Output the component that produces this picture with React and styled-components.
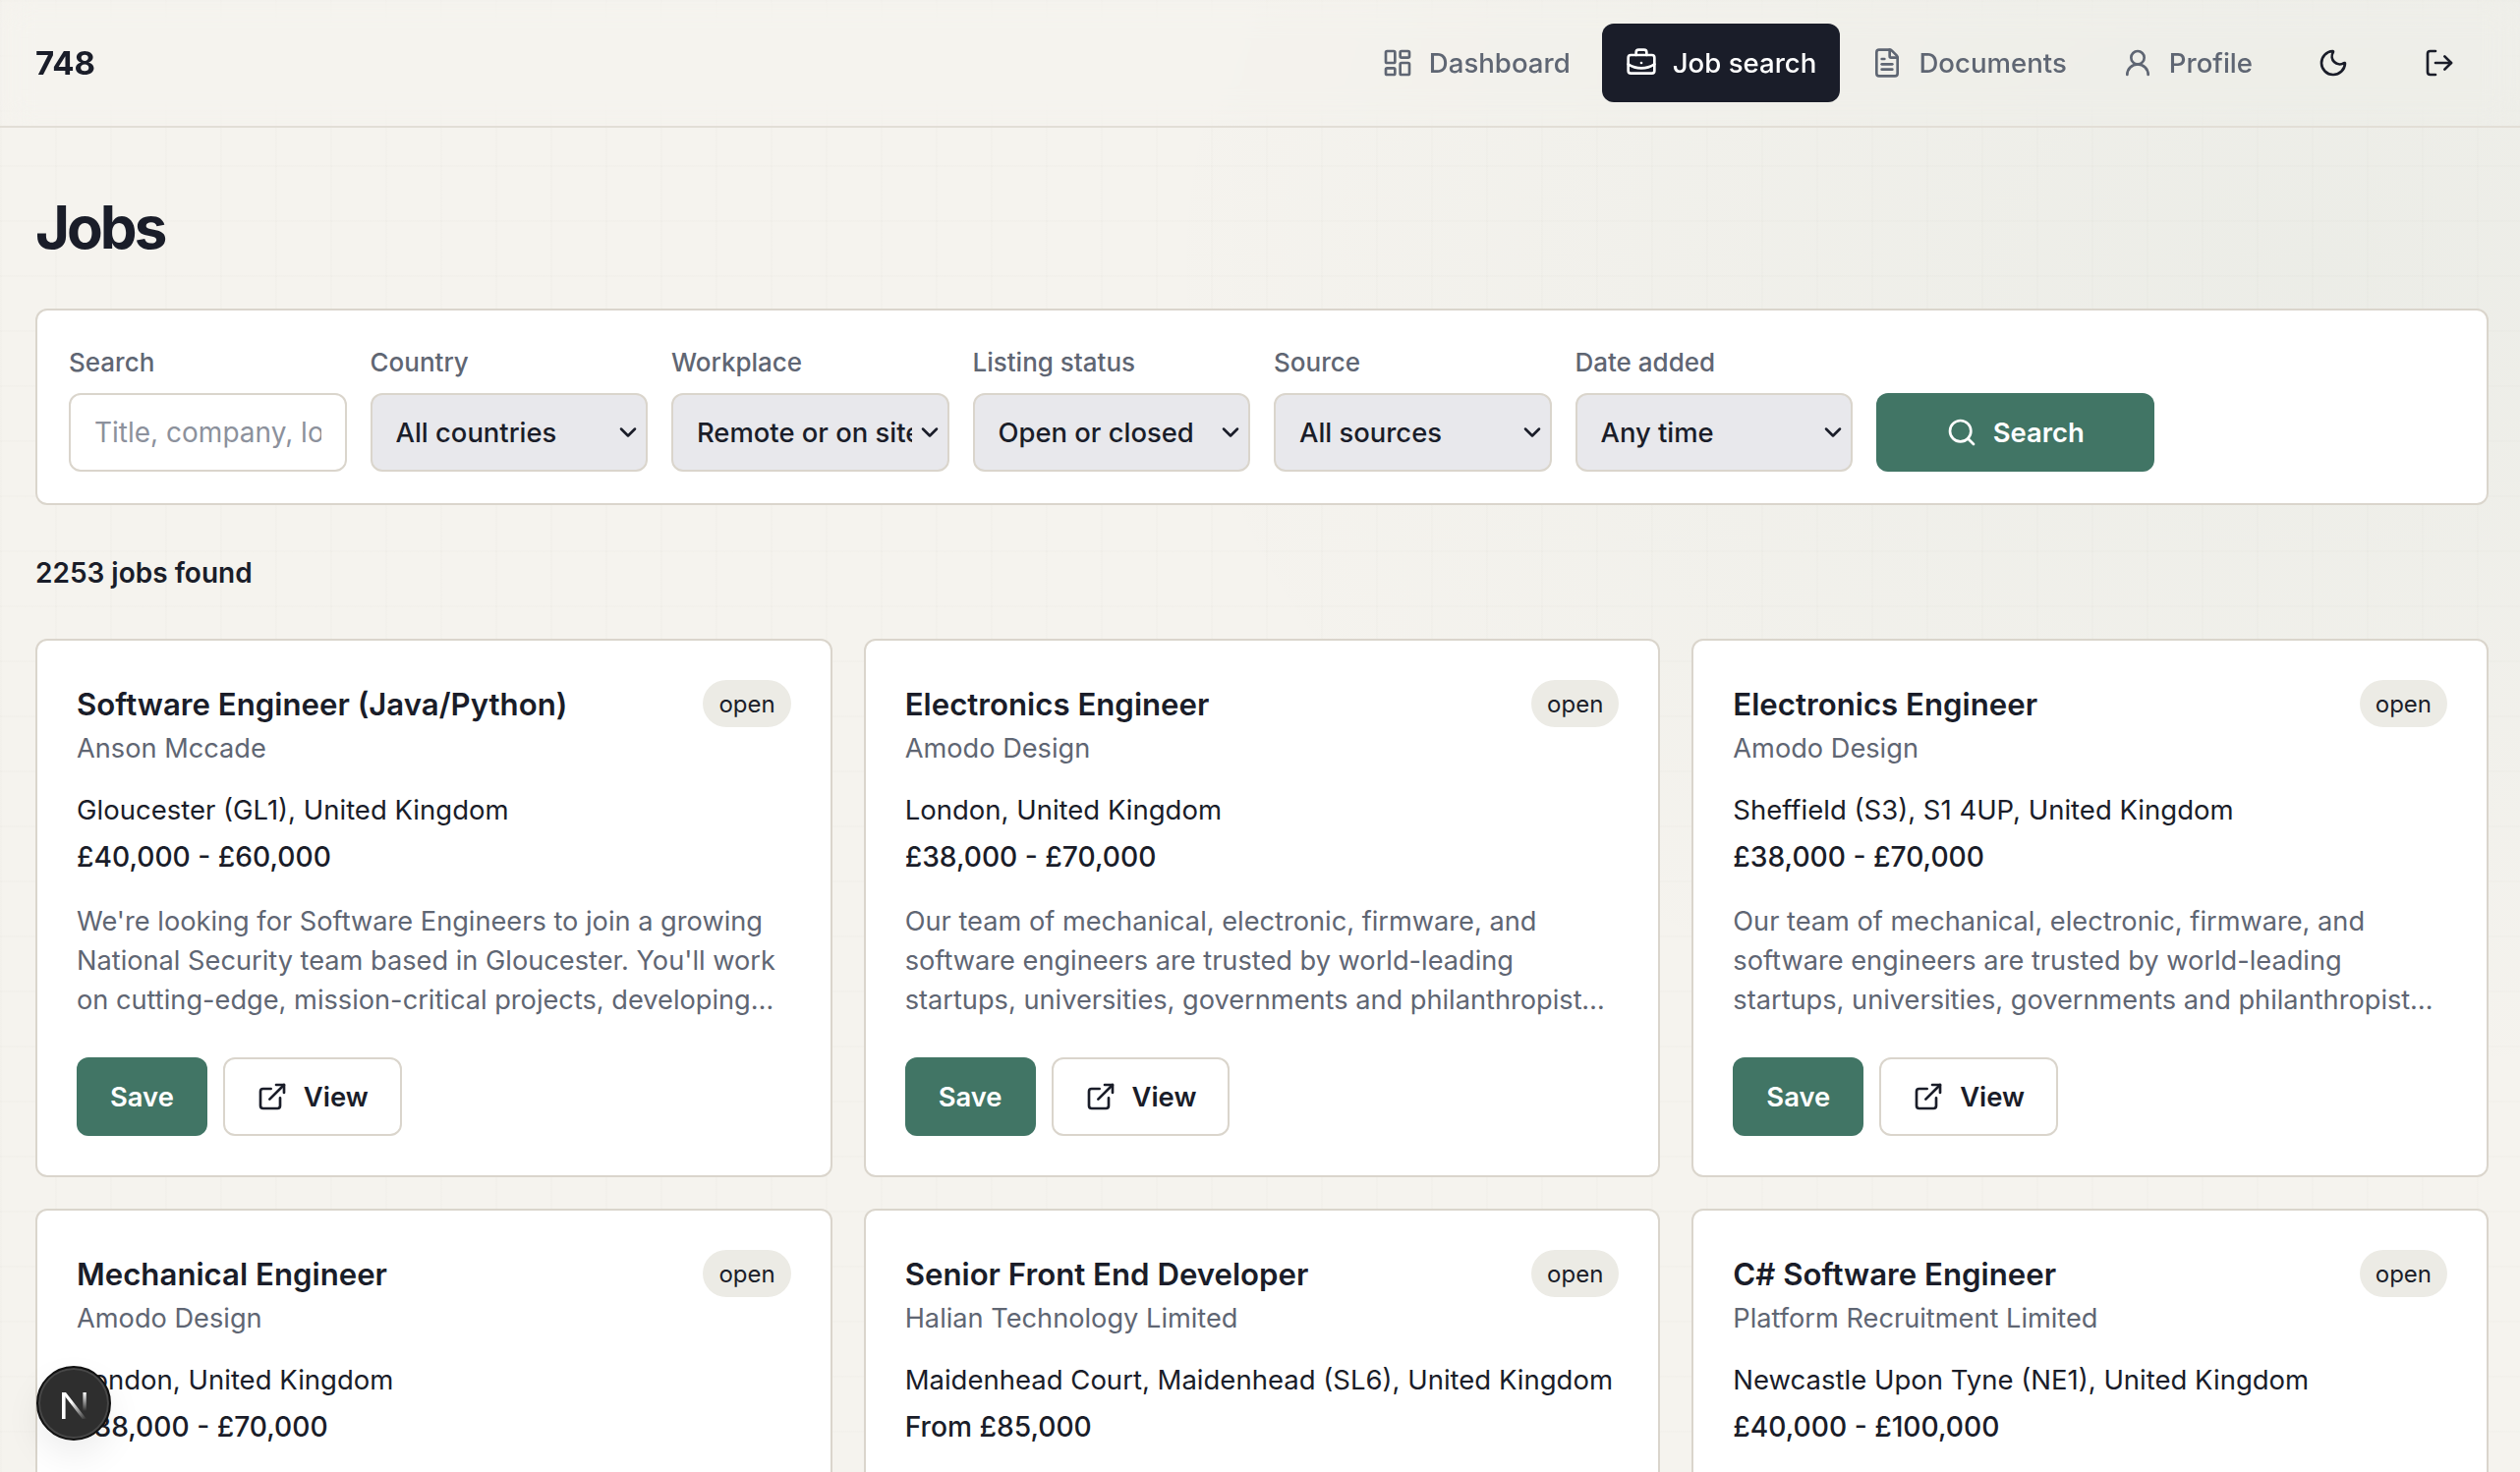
import React from "react";
import styled, { createGlobalStyle } from "styled-components";
import {
  LayoutDashboard,
  BriefcaseBusiness,
  FileText,
  UserRound,
  Moon,
  LogOut,
  Search,
  ExternalLink,
  ChevronDown
} from "lucide-react";

const GlobalStyle = createGlobalStyle`
  * {
    box-sizing: border-box;
  }
  html, body {
    margin: 0;
    padding: 0;
    height: 100%;
    overflow: hidden;
  }
  body {
    font-family: Inter, "Liberation Sans", sans-serif;
    color: #1a1d29;
    background-color: #f5f3ee;
  }
`;

const Page = styled.div`
  position: relative;
  height: 1498px;
  overflow: hidden;
  background-color: #f5f3ee;
  background-image:
    radial-gradient(1200px 850px at 92% 18%, rgba(64, 116, 98, 0.05), transparent 100%),
    linear-gradient(rgba(60, 60, 40, 0.01) 2px, transparent 2px),
    linear-gradient(90deg, rgba(60, 60, 40, 0.01) 2px, transparent 2px);
  background-size: 100% 100%, 56px 56px, 56px 56px;
`;

const Header = styled.header`
  height: 130px;
  padding: 0 32px 0 36px;
  display: flex;
  align-items: center;
  justify-content: space-between;
  border-bottom: 2px solid #e2ded6;
  backdrop-filter: blur(16px);
`;

const Logo = styled.div`
  font-size: 33px;
  font-weight: 700;
`;

const Nav = styled.nav`
  display: flex;
  align-items: center;
  gap: 8px;
`;

const NavItem = styled.a`
  height: 80px;
  padding: 0 24px;
  display: flex;
  align-items: center;
  gap: 16px;
  border-radius: 12px;
  font-size: 27.6px;
  font-weight: 500;
  color: ${props => (props.$active ? "#ffffff" : "#5f6673")};
  background: ${props => (props.$active ? "#1a1d29" : "transparent")};
`;

const IconButton = styled.button`
  width: 100px;
  height: 80px;
  display: flex;
  align-items: center;
  justify-content: center;
  border: 0;
  padding: 0;
  border-radius: 12px;
  background: transparent;
  color: #1a1d29;
`;

const Main = styled.main`
  padding: 0 32px 0 36px;
`;

const Title = styled.h1`
  margin: 0;
  padding-top: 65px;
  height: 184px;
  font-size: 60px;
  line-height: 72px;
  font-weight: 700;
  letter-spacing: -3px;
`;

const FilterPanel = styled.form`
  display: grid;
  grid-template-columns: repeat(8, 1fr);
  gap: 24px;
  align-items: end;
  padding: 32px;
  background: #ffffff;
  border: 2px solid #dad5cc;
  border-radius: 12px;
`;

const Field = styled.label`
  display: flex;
  flex-direction: column;
  gap: 11px;
  min-width: 0;
`;

const FieldLabel = styled.span`
  padding-top: 1px;
  font-size: 26px;
  line-height: 40px;
  font-weight: 550;
  color: #5f6673;
`;

const TextInput = styled.input`
  width: 100%;
  height: 80px;
  padding: 0 24px;
  font: 400 28px Inter, sans-serif;
  color: #1a1d29;
  background: #ffffff;
  border: 2px solid #dad5cc;
  border-radius: 12px;
  outline: none;
  &::placeholder {
    color: #8c919c;
    opacity: 1;
  }
`;

const SelectBox = styled.div`
  position: relative;
  color: #1a1d29;
  svg {
    position: absolute;
    top: 50%;
    right: 6px;
    transform: translateY(-50%);
    pointer-events: none;
  }
`;

const Select = styled.select`
  width: 100%;
  height: 80px;
  padding: 0 36px 0 24px;
  appearance: none;
  font: 500 27.4px Inter, sans-serif;
  color: #1a1d29;
  background: #e8e8ec;
  border: 2px solid #dad5cc;
  border-radius: 12px;
  outline: none;
`;

const PrimaryButton = styled.button`
  height: 80px;
  display: flex;
  align-items: center;
  justify-content: center;
  gap: 16px;
  padding: 0 34px;
  border: 0;
  border-radius: 12px;
  font: 600 27.4px Inter, sans-serif;
  color: #ffffff;
  background: #417565;
`;

const ResultCount = styled.p`
  margin: 0;
  height: 136px;
  padding-top: 49px;
  font-size: 28px;
  line-height: 40px;
  font-weight: 600;
`;

const CardGrid = styled.section`
  display: grid;
  grid-template-columns: repeat(3, 1fr);
  gap: 32px;
`;

const Card = styled.article`
  padding: 40px;
  background: #ffffff;
  border: 2px solid #dad5cc;
  border-radius: 12px;
`;

const CardTop = styled.div`
  display: flex;
  justify-content: space-between;
  align-items: flex-start;
`;

const JobTitle = styled.h3`
  margin: 0;
  padding-top: 1px;
  font-size: 31.2px;
  line-height: 49px;
  font-weight: 600;
`;

const Badge = styled.span`
  height: 48px;
  padding: 0 16px;
  display: flex;
  align-items: center;
  border-radius: 24px;
  font-size: 24px;
  color: #1a1d29;
  background: #ecebe5;
`;

const Company = styled.div`
  font-size: 27.2px;
  line-height: 40px;
  color: #5f6673;
`;

const Location = styled.div`
  margin-top: 22px;
  font-size: 27.5px;
  line-height: 40px;
`;

const Salary = styled.div`
  margin-top: 8px;
  font-size: 28.2px;
  line-height: 40px;
  font-weight: 500;
`;

const Description = styled.p`
  margin: 26px 0 0;
  padding-right: 8px;
  font-size: 27.2px;
  line-height: 40px;
  color: #5f6673;
  display: -webkit-box;
  -webkit-box-orient: vertical;
  -webkit-line-clamp: 3;
  overflow: hidden;
`;

const Actions = styled.div`
  margin-top: 38px;
  display: flex;
  gap: 16px;
`;

const ViewButton = styled.a`
  height: 80px;
  padding: 0 32px;
  display: flex;
  align-items: center;
  gap: 16px;
  font-size: 27.4px;
  font-weight: 600;
  color: #1a1d29;
  background: #ffffff;
  border: 2px solid #dad5cc;
  border-radius: 12px;
`;

const DevBadge = styled.div`
  position: absolute;
  left: 37px;
  top: 1390px;
  width: 76px;
  height: 76px;
  display: flex;
  align-items: center;
  justify-content: center;
  border-radius: 50%;
  background: #2e2e2e;
  border: 2px solid #111111;
  box-shadow: inset 0 0 0 2px #474747, 0 16px 36px rgba(0, 0, 0, 0.07);
`;

const filters = [
  { label: "Country", value: "All countries" },
  { label: "Workplace", value: "Remote or on site" },
  { label: "Listing status", value: "Open or closed" },
  { label: "Source", value: "All sources" },
  { label: "Date added", value: "Any time" }
];

const links = [
  { label: "Dashboard", icon: LayoutDashboard },
  { label: "Job search", icon: BriefcaseBusiness, active: true },
  { label: "Documents", icon: FileText },
  { label: "Profile", icon: UserRound }
];

const amodoText =
  "Our team of mechanical, electronic, firmware, and software engineers are trusted by world-leading startups, universities, governments and philanthropists to design and build products.";

const jobs = [
  {
    title: "Software Engineer (Java/Python)",
    company: "Anson Mccade",
    location: "Gloucester (GL1), United Kingdom",
    salary: "£40,000 - £60,000",
    text: "We're looking for Software Engineers to join a growing National Security team based in Gloucester. You'll work on cutting-edge, mission-critical projects, developing software used across the country."
  },
  {
    title: "Electronics Engineer",
    company: "Amodo Design",
    location: "London, United Kingdom",
    salary: "£38,000 - £70,000",
    text: amodoText
  },
  {
    title: "Electronics Engineer",
    company: "Amodo Design",
    location: "Sheffield (S3), S1 4UP, United Kingdom",
    salary: "£38,000 - £70,000",
    text: amodoText
  },
  {
    title: "Mechanical Engineer",
    company: "Amodo Design",
    location: "London, United Kingdom",
    salary: "£38,000 - £70,000",
    text: amodoText
  },
  {
    title: "Senior Front End Developer",
    company: "Halian Technology Limited",
    location: "Maidenhead Court, Maidenhead (SL6), United Kingdom",
    salary: "From £85,000",
    text: "We are looking for a Senior Front End Developer to join a growing team and build modern web applications."
  },
  {
    title: "C# Software Engineer",
    company: "Platform Recruitment Limited",
    location: "Newcastle Upon Tyne (NE1), United Kingdom",
    salary: "£40,000 - £100,000",
    text: "A leading software business is looking for a C# Software Engineer to join its engineering team in Newcastle."
  }
];

const NextMark = () => (
  <svg width="40" height="40" viewBox="0 0 40 40" fill="none">
    <defs>
      <linearGradient id="nextFade" x1="18" y1="18" x2="33" y2="36" gradientUnits="userSpaceOnUse">
        <stop offset="0" stopColor="#ffffff" />
        <stop offset="1" stopColor="#ffffff" stopOpacity="0" />
      </linearGradient>
      <linearGradient id="nextStem" x1="31" y1="9" x2="31" y2="28" gradientUnits="userSpaceOnUse">
        <stop offset="0" stopColor="#ffffff" />
        <stop offset="1" stopColor="#ffffff" stopOpacity="0" />
      </linearGradient>
    </defs>
    <path d="M8 9h3.6v27H8z" fill="#ffffff" />
    <path d="M8 9h4L33 36h-4.2z" fill="url(#nextFade)" />
    <path d="M29.4 9h3.4v20h-3.4z" fill="url(#nextStem)" />
  </svg>
);

const App = () => (
  <Page>
    <GlobalStyle />
    <Header>
      <Logo>748</Logo>
      <Nav>
        {links.map(({ label, icon: Icon, active }) => (
          <NavItem key={label} $active={active}>
            <Icon size={32} strokeWidth={2} />
            {label}
          </NavItem>
        ))}
        <IconButton aria-label="Theme">
          <Moon size={32} strokeWidth={2} />
        </IconButton>
        <IconButton aria-label="Log out">
          <LogOut size={32} strokeWidth={2} />
        </IconButton>
      </Nav>
    </Header>
    <Main>
      <Title>Jobs</Title>
      <FilterPanel>
        <Field>
          <FieldLabel>Search</FieldLabel>
          <TextInput placeholder="Title, company, location" />
        </Field>
        {filters.map(filter => (
          <Field key={filter.label}>
            <FieldLabel>{filter.label}</FieldLabel>
            <SelectBox>
              <Select defaultValue={filter.value}>
                <option>{filter.value}</option>
              </Select>
              <ChevronDown size={28} strokeWidth={2.2} />
            </SelectBox>
          </Field>
        ))}
        <PrimaryButton type="button">
          <Search size={32} strokeWidth={2} />
          Search
        </PrimaryButton>
      </FilterPanel>
      <ResultCount>2253 jobs found</ResultCount>
      <CardGrid>
        {jobs.map((job, index) => (
          <Card key={index}>
            <CardTop>
              <JobTitle>{job.title}</JobTitle>
              <Badge>open</Badge>
            </CardTop>
            <Company>{job.company}</Company>
            <Location>{job.location}</Location>
            <Salary>{job.salary}</Salary>
            <Description>{job.text}</Description>
            <Actions>
              <PrimaryButton type="button">Save</PrimaryButton>
              <ViewButton>
                <ExternalLink size={32} strokeWidth={2} />
                View
              </ViewButton>
            </Actions>
          </Card>
        ))}
      </CardGrid>
    </Main>
    <DevBadge>
      <NextMark />
    </DevBadge>
  </Page>
);

export default App;
